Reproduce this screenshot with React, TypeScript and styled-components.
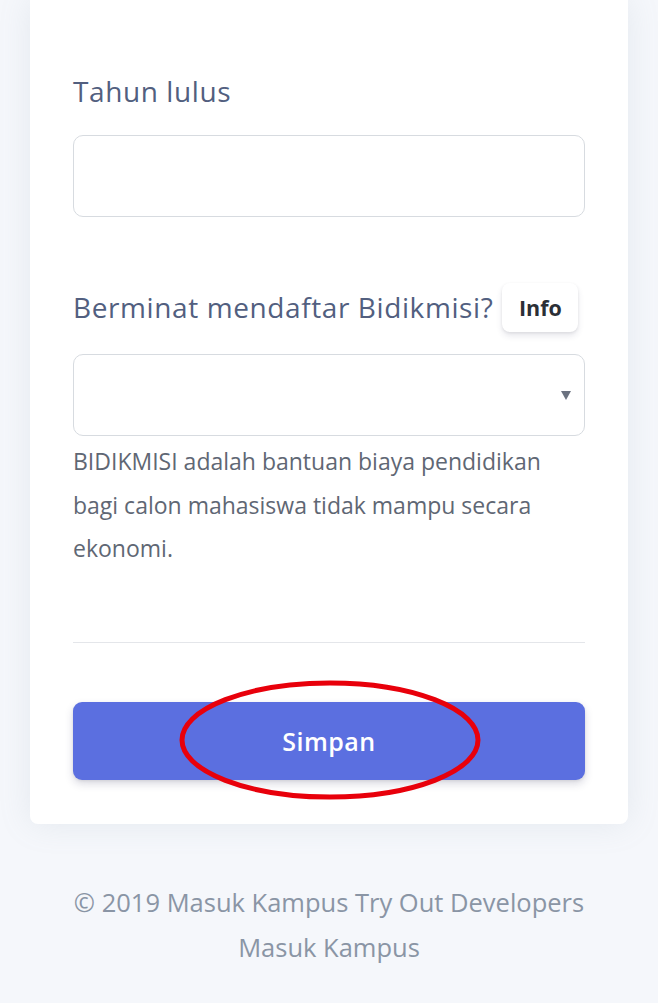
import styled, { createGlobalStyle } from "styled-components"

const GlobalStyle = createGlobalStyle`
    body {
        margin: 0;
        background: #f5f7fb;
        font-family: "Open Sans", "Noto Sans", sans-serif;
        color: #525f7f;
    }
    * { box-sizing: border-box; }
`

const Page = styled.div`
    padding: 0 30px;
    width: 658px;
    min-height: 1003px;
`

const Card = styled.div`
    background: #fff;
    border-radius: 0 0 8px 8px;
    padding: 72px 43px 44px;
    box-shadow: 0 0 32px rgba(136, 152, 170, 0.15);
`

const Group = styled.div`
    & + & { margin-top: 66px; }
`

const Label = styled.label`
    display: block;
    font-size: 28px;
    letter-spacing: 0.6px;
    line-height: 39px;
    color: #525f7f;
`

const LabelRow = styled.div`
    display: flex;
    align-items: center;
    gap: 9px;
    height: 49px;
`

const InfoButton = styled.button`
    font-family: inherit;
    font-size: 21.5px;
    font-weight: 700;
    color: #2b2f36;
    background: #fff;
    border: 0;
    border-radius: 8px;
    height: 49px;
    width: 76px;
    padding: 0;
    box-shadow: 0 4px 6px rgba(50, 50, 93, 0.11), 0 1px 3px rgba(0, 0, 0, 0.08);
`

const Field = styled.div<{ $gap: number }>`
    position: relative;
    margin-top: ${p => p.$gap}px;
    height: 82px;
    border: 1.5px solid #d7dbe0;
    border-radius: 10px;
    background: #fff;
`

const Arrow = styled.span`
    position: absolute;
    right: 13px;
    top: 36px;
    width: 0;
    height: 0;
    border-left: 5px solid transparent;
    border-right: 5px solid transparent;
    border-top: 9px solid #6b7280;
`

const Help = styled.p`
    margin: 4px 0 0;
    font-size: 23px;
    line-height: 43.5px;
    color: #5f6774;
`

const Divider = styled.hr`
    margin: 71px 0 0;
    border: 0;
    border-top: 1.5px solid #e4e6ea;
`

const SubmitWrap = styled.div`
    position: relative;
    margin-top: 59px;
`

const Submit = styled.button`
    display: block;
    width: 100%;
    height: 78px;
    border: 0;
    border-radius: 9px;
    background: #5b6fe0;
    color: #fff;
    font-family: inherit;
    font-size: 25px;
    font-weight: 600;
    letter-spacing: 0.5px;
    box-shadow: 0 4px 8px rgba(50, 50, 93, 0.18), 0 1px 3px rgba(0, 0, 0, 0.08);
`

const Mark = styled.svg`
    position: absolute;
    left: 104px;
    top: -24px;
    pointer-events: none;
`

const Footer = styled.footer`
    margin-top: 56px;
    text-align: center;
    font-size: 25.5px;
    line-height: 45px;
    color: #8a95a5;
`

export default function App() {
    return (
        <Page>
            <GlobalStyle />
            <Card>
                <Group>
                    <Label>Tahun lulus</Label>
                    <Field $gap={24} />
                </Group>
                <Group>
                    <LabelRow>
                        <Label>Berminat mendaftar Bidikmisi?</Label>
                        <InfoButton>Info</InfoButton>
                    </LabelRow>
                    <Field $gap={22}>
                        <Arrow />
                    </Field>
                    <Help>
                        BIDIKMISI adalah bantuan biaya pendidikan bagi calon mahasiswa tidak mampu secara ekonomi.
                    </Help>
                </Group>
                <Divider />
                <SubmitWrap>
                    <Submit>Simpan</Submit>
                    <Mark width="306" height="124" viewBox="0 0 306 124">
                        <ellipse cx="153" cy="62" rx="148" ry="57" fill="none" stroke="#e8000b" strokeWidth="5" />
                    </Mark>
                </SubmitWrap>
            </Card>
            <Footer>
                © 2019 Masuk Kampus Try Out Developers
                <br />
                Masuk Kampus
            </Footer>
        </Page>
    )
}
